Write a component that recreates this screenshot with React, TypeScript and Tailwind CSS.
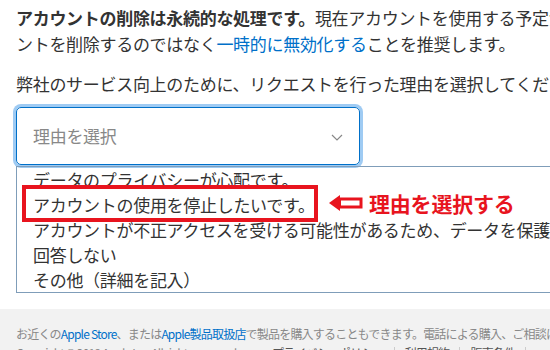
import React from "react";

const reasons = [
  "データのプライバシーが心配です。",
  "アカウントの使用を停止したいです。",
  "アカウントが不正アクセスを受ける可能性があるため、データを保護したいです。",
  "回答しない",
  "その他（詳細を記入）",
];

const ArrowLeft = () => (
  <svg width="34" height="18" viewBox="0 0 34 18" className="shrink-0">
    <path d="M0 9 L11 1 L11 17 Z" fill="#e8141e" />
    <rect x="10.5" y="5" width="21.5" height="8" fill="#fff" stroke="#e8141e" strokeWidth="3" />
  </svg>
);

export default function App() {
  return (
    <div
      className="relative w-[550px] h-[350px] overflow-hidden bg-white text-[#333]"
      style={{ fontFamily: '"Noto Sans CJK JP", "Noto Sans", sans-serif' }}
    >
      <main className="px-4 pt-[5px]">
        {/* Intro */}
        <p className="text-[17px] leading-[26px] tracking-[-0.3px] whitespace-nowrap">
          <strong className="font-bold">アカウントの削除は永続的な処理です。</strong>
          現在アカウントを使用する予定がない場合は、アカウ
          <br />
          ントを削除するのではなく
          <a className="text-[#0070c9]">一時的に無効化する</a>
          ことを推奨します。
        </p>

        <p className="mt-[14px] text-[17px] leading-[26px] tracking-[-0.3px] whitespace-nowrap">
          弊社のサービス向上のために、リクエストを行った理由を選択してください。
        </p>

        {/* Select */}
        <div className="mt-[10px] w-[344px] h-[58px] rounded-[5px] border border-[#0070c9] ring-[3px] ring-[#9fcbf3] flex items-center justify-between pl-4 pr-[16px]">
          <span className="text-[17px] tracking-[-0.3px] text-[#888]">理由を選択</span>
          <svg width="12" height="7" viewBox="0 0 12 7" className="mt-[2px]">
            <path d="M1 1 L6 6 L11 1" fill="none" stroke="#888" strokeWidth="1.2" />
          </svg>
        </div>

        {/* Listbox */}
        <ul className="mt-[1px] w-[600px] border border-[#7f9db9] text-[17px] leading-[25px] tracking-[-0.3px] whitespace-nowrap">
          {reasons.map((r) => (
            <li key={r} className="pl-4">
              {r}
            </li>
          ))}
        </ul>
      </main>

      {/* Annotation */}
      <div className="absolute left-[22px] top-[185px] w-[296px] h-[37px] border-4 border-[#e8141e]" />
      <div className="absolute left-[329px] top-[190px] flex items-center gap-[6px]">
        <ArrowLeft />
        <span className="text-[21px] leading-[26px] font-bold text-[#e8141e] tracking-[-0.2px]">
          理由を選択する
        </span>
      </div>

      {/* Footer */}
      <footer className="mt-[16px] h-[60px] bg-[#f2f2f2] px-4 pt-[15px] text-[12px] leading-[19px] text-[#888] tracking-[-0.8px] whitespace-nowrap">
        <p>
          お近くの<a className="text-[#0070c9]">Apple Store</a>、または
          <a className="text-[#0070c9]">Apple製品取扱店</a>
          で製品を購入することもできます。電話による購入、ご相談には
        </p>
        <div className="flex items-center">
          <span>Copyright © 2019 Apple Inc. All rights reserved.</span>
          <span className="ml-[33px] pr-[10px] text-[#555]">プライバシーポリシー</span>
          <span className="h-[12px] border-l border-[#ccc]" />
          <span className="px-[10px] text-[#555]">利用規約</span>
          <span className="h-[12px] border-l border-[#ccc]" />
          <span className="px-[10px] text-[#555]">販売条件</span>
          <span className="h-[12px] border-l border-[#ccc]" />
        </div>
      </footer>
    </div>
  );
}
